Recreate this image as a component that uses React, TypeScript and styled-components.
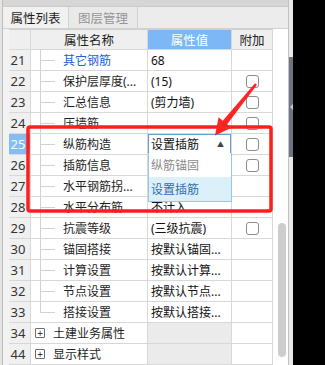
import styled, { createGlobalStyle } from 'styled-components';

const GlobalStyle = createGlobalStyle`
  html, body {
    margin: 0;
    padding: 0;
    background: #000;
    overflow: hidden;
  }
  body {
    font-family: "Noto Sans", "Noto Sans CJK SC", sans-serif;
    font-size: 12px;
    color: #1e1e1e;
  }
`;

type Row = {
  no: string;
  name: string;
  value?: string;
  check?: boolean;
  link?: boolean;
  active?: boolean;
  last?: boolean;
  group?: boolean;
};

const rows: Row[] = [
  { no: '21', name: '其它钢筋', value: '68', link: true },
  { no: '22', name: '保护层厚度(...', value: '(15)', check: true },
  { no: '23', name: '汇总信息', value: '(剪力墙)', check: true },
  { no: '24', name: '压墙筋', value: '', check: true },
  { no: '25', name: '纵筋构造', value: '', check: true, active: true },
  { no: '26', name: '插筋信息', value: '', check: true },
  { no: '27', name: '水平钢筋拐...', value: '' },
  { no: '28', name: '水平分布筋', value: '不计入' },
  { no: '29', name: '抗震等级', value: '(三级抗震)', check: true },
  { no: '30', name: '锚固搭接', value: '按默认锚固...' },
  { no: '31', name: '计算设置', value: '按默认计算...' },
  { no: '32', name: '节点设置', value: '按默认节点...' },
  { no: '33', name: '搭接设置', value: '按默认搭接...', last: true },
  { no: '34', name: '土建业务属性', group: true },
  { no: '44', name: '显示样式', group: true },
];

export default function App() {
  return (
    <Root>
      <GlobalStyle />
      <Panel>
        <TitleBar>
          <CloseGlyph>×</CloseGlyph>
        </TitleBar>
        <TabBar>
          <Tab $active>属性列表</Tab>
          <Tab>图层管理</Tab>
        </TabBar>
        <Body>
          <Gutter />
          <Table>
            <HeadCell />
            <HeadCell>属性名称</HeadCell>
            <HeadCell $blue>属性值</HeadCell>
            <HeadCell>附加</HeadCell>
            {rows.map((r) => (
              <RowGroup key={r.no} r={r} />
            ))}
          </Table>
          <ScrollTrack>
            <Thumb />
          </ScrollTrack>
        </Body>
      </Panel>
      <Splitter>
        <Handle>
          <HandleArrow />
        </Handle>
      </Splitter>

      <Dropdown>
        <Option>纵筋锚固</Option>
        <Option $selected>设置插筋</Option>
      </Dropdown>

      <Overlay width="325" height="365" viewBox="0 0 325 365">
        <rect x="28" y="127" width="243" height="84" rx="2" fill="none" stroke="#ff1e1e" strokeWidth="3.5" />
        <polygon
          fill="#ff2424"
          points="255,83.2 257,84.8 227.2,124.3 231.4,127.7 215,135.5 218.6,117.3 222.8,120.7"
        />
      </Overlay>
    </Root>
  );
}

const RowGroup = ({ r }: { r: Row }) => (
  <>
    <NumCell $active={r.active}>{r.no}</NumCell>
    {r.group ? (
      <NameCell $plain>
        <PlusBox>+</PlusBox>
        <GroupLabel>{r.name}</GroupLabel>
      </NameCell>
    ) : (
      <NameCell $last={r.last} $link={r.link}>
        {r.name}
      </NameCell>
    )}
    {r.active ? (
      <ValueCell>
        <Combo>
          <span>设置插筋</span>
          <ComboArrow>▲</ComboArrow>
        </Combo>
      </ValueCell>
    ) : (
      <ValueCell $group={r.group}>{r.value}</ValueCell>
    )}
    <ExtraCell>{r.check && <CheckBox />}</ExtraCell>
  </>
);

const Root = styled.div`
  position: relative;
  display: flex;
  width: 325px;
  height: 365px;
  overflow: hidden;
  background: #000;
`;

const Panel = styled.div`
  width: 286px;
  height: 365px;
  display: flex;
  flex-direction: column;
  background: #fff;
  border-left: 2px solid #e4e4e4;
  border-right: 1px solid #c4c4c4;
`;

const TitleBar = styled.div`
  height: 6px;
  background: #d6d6d6;
  display: flex;
  justify-content: flex-end;
  padding-right: 4px;
  overflow: hidden;
  border-left: 1px solid #bcbcbc;
`;

const CloseGlyph = styled.span`
  font-size: 13px;
  line-height: 13px;
  margin-top: -9px;
  color: #8a8a8a;
`;

const TabBar = styled.div`
  height: 23px;
  box-sizing: border-box;
  display: flex;
  background: #ececec;
  border-left: 1px solid #bcbcbc;
  border-bottom: 1px solid #d0d0d0;
  border-top: 1px solid #cacaca;
`;

const Tab = styled.div<{ $active?: boolean }>`
  width: ${(p) => (p.$active ? '66px' : '69px')};
  box-sizing: border-box;
  display: flex;
  align-items: center;
  justify-content: center;
  font-size: 12.5px;
  color: ${(p) => (p.$active ? '#1e1e1e' : '#969696')};
  background: ${(p) => (p.$active ? '#f1f1f1' : '#e9e9e9')};
  border-right: 1px solid #d2d2d2;
`;

const Body = styled.div`
  flex: 1;
  display: flex;
  border-left: 1px solid #bcbcbc;
`;

const Gutter = styled.div`
  width: 6px;
  background: #f3f3f3;
`;

const Table = styled.div`
  display: grid;
  grid-template-columns: 22px 117px 84px 41px;
  grid-auto-rows: 21px;
  align-content: start;
`;

const Cell = styled.div`
  box-sizing: border-box;
  border-right: 1px solid #d8d8d8;
  border-bottom: 1px solid #d8d8d8;
  display: flex;
  align-items: center;
  white-space: nowrap;
  overflow: hidden;
`;

const HeadCell = styled(Cell)<{ $blue?: boolean }>`
  justify-content: center;
  font-size: 12.5px;
  border-top: 1px solid #d0d0d0;
  background: ${(p) => (p.$blue ? '#7db7f6' : '#efefef')};
  color: ${(p) => (p.$blue ? '#fff' : '#222')};
`;

const NumCell = styled(Cell)<{ $active?: boolean }>`
  justify-content: center;
  font-size: 13px;
  padding-right: 3px;
  background: ${(p) => (p.$active ? '#84bcf3' : '#f0f0f0')};
  color: ${(p) => (p.$active ? '#fff' : '#333')};
`;

const NameCell = styled(Cell)<{ $last?: boolean; $link?: boolean; $plain?: boolean }>`
  position: relative;
  padding-left: ${(p) => (p.$plain ? '4px' : '32px')};
  color: ${(p) => (p.$link ? '#1c5fd2' : '#1e1e1e')};

  &::before {
    content: ${(p) => (p.$plain ? 'none' : "''")};
    position: absolute;
    left: 9px;
    top: 0;
    width: 1px;
    height: ${(p) => (p.$last ? '50%' : '21px')};
    background: #d2d2d2;
  }

  &::after {
    content: ${(p) => (p.$plain ? 'none' : "''")};
    position: absolute;
    left: 9px;
    top: 10px;
    width: 15px;
    height: 1px;
    background: #d2d2d2;
  }
`;

const PlusBox = styled.span`
  width: 10px;
  height: 10px;
  box-sizing: border-box;
  border: 1px solid #6c6c6c;
  border-radius: 1px;
  display: flex;
  align-items: center;
  justify-content: center;
  font-size: 10px;
  line-height: 10px;
  color: #333;
`;

const GroupLabel = styled.span`
  margin-left: 8px;
`;

const ValueCell = styled(Cell)<{ $group?: boolean }>`
  padding-left: ${(p) => (p.$group ? '0' : '3px')};
  background: ${(p) => (p.$group ? '#ebebeb' : '#fff')};
  color: #111;
`;

const Combo = styled.div`
  margin-left: -3px;
  width: 84px;
  height: 21px;
  box-sizing: border-box;
  border: 1px solid #5f9fd8;
  background: #fff;
  display: flex;
  align-items: center;
  justify-content: space-between;
  padding: 0 6px 0 2px;
`;

const ComboArrow = styled.span`
  font-size: 7px;
  color: #444;
`;

const ExtraCell = styled(Cell)`
  justify-content: center;
`;

const CheckBox = styled.span`
  width: 13px;
  height: 13px;
  box-sizing: border-box;
  border: 1px solid #8c8c8c;
  border-radius: 3px;
  background: #fff;
`;

const ScrollTrack = styled.div`
  width: 15px;
  display: flex;
  flex-direction: column;
  align-items: center;
  padding-left: 2px;
  box-sizing: border-box;
`;

const Thumb = styled.div`
  margin-top: 194px;
  width: 8px;
  height: 134px;
  border-radius: 4px;
  background: #cdcdcd;
`;

const Splitter = styled.div`
  width: 4px;
  background: #e9e9e9;
  display: flex;
  flex-direction: column;
`;

const Handle = styled.div`
  margin-top: 57px;
  height: 100px;
  background: #6d7680;
  display: flex;
  align-items: center;
  justify-content: center;
`;

const HandleArrow = styled.span`
  width: 0;
  height: 0;
  border-top: 3px solid transparent;
  border-bottom: 3px solid transparent;
  border-right: 3px solid #c4cad0;
`;

const Dropdown = styled.div`
  position: absolute;
  left: 148px;
  top: 153px;
  width: 84px;
  box-sizing: border-box;
  border: 1px solid #98c7ea;
  border-top: none;
  background: #fff;
`;

const Option = styled.div<{ $selected?: boolean }>`
  height: 24px;
  display: flex;
  align-items: center;
  padding-left: 2px;
  white-space: nowrap;
  background: ${(p) => (p.$selected ? '#dcf0fa' : '#fff')};
  color: ${(p) => (p.$selected ? '#2f6eae' : '#8a8a8a')};
`;

const Overlay = styled.svg`
  position: absolute;
  left: 0;
  top: 0;
  pointer-events: none;
`;
